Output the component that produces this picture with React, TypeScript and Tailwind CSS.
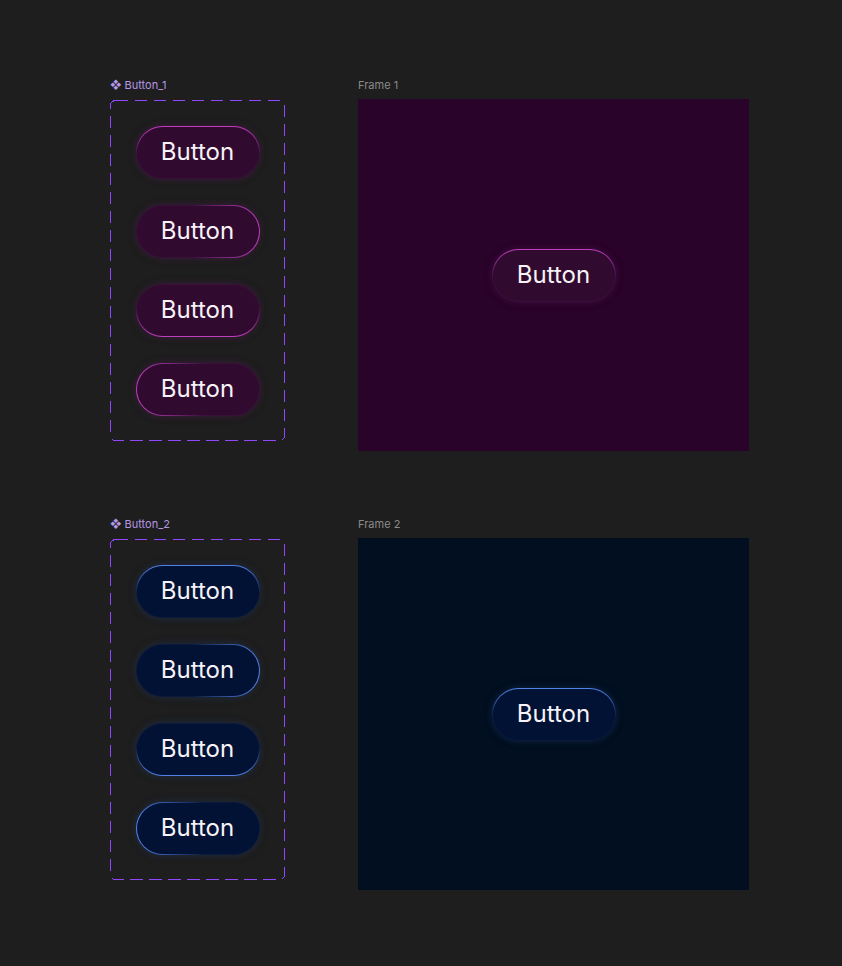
import React from 'react';

type Side = 'top' | 'right' | 'bottom' | 'left';

interface Theme {
  stroke: string;
  fill: string;
  rest: string;
  glow: string;
}

const purple: Theme = {
  stroke: '#c23fc0',
  fill: '#310a30',
  rest: '#38103a',
  glow: 'rgba(190,60,190,0.28)',
};

const blue: Theme = {
  stroke: '#5283ea',
  fill: '#021234',
  rest: '#0a1a3c',
  glow: 'rgba(80,130,235,0.28)',
};

const dirs: Record<Side, string> = {
  top: 'to bottom',
  right: 'to left',
  bottom: 'to top',
  left: 'to right',
};

function GlowButton({ theme, side }: { theme: Theme; side: Side }) {
  return (
    <div
      className="w-[124px] h-[53px] rounded-full p-px"
      style={{
        background: `linear-gradient(${dirs[side]}, ${theme.stroke} 0%, ${theme.rest} 55%)`,
        boxShadow: `0 0 8px rgba(0,0,0,0.35), 0 0 7px ${theme.glow}`,
      }}
    >
      <div
        className="w-full h-full rounded-full flex items-center justify-center text-[24px] text-[#f7f2f7] font-normal"
        style={{ background: theme.fill }}
      >
        Button
      </div>
    </div>
  );
}

function ComponentSet({ name, theme }: { name: string; theme: Theme }) {
  const sides: Side[] = ['top', 'right', 'bottom', 'left'];
  return (
    <div className="w-[175px] flex flex-col">
      <div className="h-[14px] mb-[8px] flex items-center gap-[3px] text-[11px] leading-[14px] text-[#b497e6] overflow-hidden">
        <span className="text-[11px] text-[#b497e6]">❖</span>
        <span>{name}</span>
      </div>
      <div className="relative h-[341px] flex flex-col items-center justify-center gap-[26px]">
        <svg className="absolute left-0 top-0 block" width="175" height="341" viewBox="0 0 175 341">
          <rect
            x="0.5"
            y="0.5"
            width="174"
            height="340"
            rx="5"
            fill="none"
            stroke="#9047ff"
            strokeWidth="1"
            strokeDasharray="12.5 6.5"
            shapeRendering="crispEdges"
          />
        </svg>
        {sides.map((s) => (
          <GlowButton key={s} theme={theme} side={s} />
        ))}
      </div>
    </div>
  );
}

function Frame({ name, bg, theme }: { name: string; bg: string; theme: Theme }) {
  return (
    <div className="flex flex-col">
      <div className="h-[14px] mb-[7px] text-[11px] leading-[14px] text-[#8a8a8a]">{name}</div>
      <div className={`w-[391px] h-[352px] flex items-center justify-center ${bg}`}>
        <GlowButton theme={theme} side="top" />
      </div>
    </div>
  );
}

export default function App() {
  return (
    <div
      className="min-h-screen bg-[#1e1e1e] pt-[78px] pl-[110px] flex flex-col gap-[66px]"
      style={{ fontFamily: 'Inter, "Noto Sans", sans-serif' }}
    >
      <div className="flex gap-[73px]">
        <ComponentSet name="Button_1" theme={purple} />
        <Frame name="Frame 1" bg="bg-[#29032a]" theme={purple} />
      </div>
      <div className="flex gap-[73px]">
        <ComponentSet name="Button_2" theme={blue} />
        <Frame name="Frame 2" bg="bg-[#010f20]" theme={blue} />
      </div>
    </div>
  );
}
